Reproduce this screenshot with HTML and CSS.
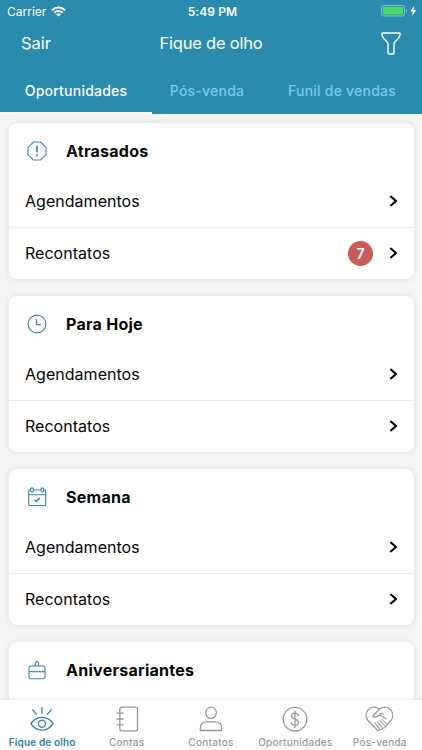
FILE: index.html
```html
<!DOCTYPE html>
<html lang="pt-BR">
<head>
<meta charset="utf-8">
<title>Fique de olho</title>
<link rel="stylesheet" href="styles.css">
</head>
<body>
<div class="app">
  <header class="header">
    <div class="status">
      <div class="status-left"><span>Carrier</span>
        <svg class="wifi" width="15" height="11" viewBox="0 0 15 11" fill="none" stroke="#fff" stroke-width="2"><path d="M1 4.2a9.3 9.3 0 0 1 13 0M3.4 6.7a5.9 5.9 0 0 1 8.2 0"/><path d="M7.5 10.6 5.2 8.4a3.3 3.3 0 0 1 4.6 0z" fill="#fff" stroke="none"/></svg>
      </div>
      <div class="time">5:49 PM</div>
      <div class="status-right">
        <svg width="36" height="12" viewBox="0 0 36 12"><rect x=".6" y=".6" width="23" height="10.4" rx="2.2" fill="none" stroke="#8fc2d6"/><rect x="2" y="2" width="20.2" height="7.6" rx="1" fill="#4cd964"/><path d="M25 4c1.3.5 1.3 3.1 0 3.600z" fill="#8fc2d6"/><path d="M33.300.7 29.300 6.600h2.600L30.900 11l4.300-6h-2.700z" fill="#fff"/></svg>
      </div>
    </div>
    <div class="nav">
      <span class="nav-action">Sair</span>
      <span class="nav-title">Fique de olho</span>
      <svg class="filter" width="20" height="23" viewBox="0 0 20 23" fill="none" stroke="#fff" stroke-width="1.4" stroke-linejoin="round"><path d="M1.600 1h16.800q1 .1.700 1.200c-.2 3.300-2.600 5.200-5.400 8.100q-.7.700-.7 1.700v8.700q0 1.300-1.300 1.300H8.300Q7 22 7 20.700V12q0-1-.7-1.700C3.500 7.400 1.100 5.500.9 2.200Q.7 1.100 1.600 1z"/></svg>
    </div>
    <nav class="tabs">
      <div class="tab tab-active"><span>Oportunidades</span></div>
      <div class="tab tab-middle"><span>Pós-venda</span></div>
      <div class="tab tab-last"><span>Funil de vendas</span></div>
    </nav>
  </header>

  <main class="content">
    <section class="card">
      <h2 class="card-head"><svg class="card-icon" viewBox="0 0 20 20"><path d="M6.400 1h7.200L19 6.400v7.200L13.600 19H6.400L1 13.600V6.400z"/><path d="M10 4.700v6.700M10 13.200v2" stroke-width="1.700"/></svg><span>Atrasados</span></h2>
      <div class="row"><span class="label">Agendamentos</span><svg class="chevron" viewBox="0 0 9 12"><path d="M1.300.9 7 6l-5.700 5.100"/></svg></div>
      <div class="row"><span class="label">Recontatos</span><span class="badge">7</span><svg class="chevron" viewBox="0 0 9 12"><path d="M1.300.9 7 6l-5.700 5.100"/></svg></div>
    </section>
    <section class="card">
      <h2 class="card-head"><svg class="card-icon" viewBox="0 0 20 20"><circle cx="10" cy="10" r="8.900"/><path d="M9.500 5v5.700h4.300" stroke-width="1.300"/></svg><span>Para Hoje</span></h2>
      <div class="row"><span class="label">Agendamentos</span><svg class="chevron" viewBox="0 0 9 12"><path d="M1.300.9 7 6l-5.700 5.100"/></svg></div>
      <div class="row"><span class="label">Recontatos</span><svg class="chevron" viewBox="0 0 9 12"><path d="M1.300.9 7 6l-5.700 5.100"/></svg></div>
    </section>
    <section class="card">
      <h2 class="card-head"><svg class="card-icon" viewBox="0 0 20 20"><path d="M3.500 3H2.700Q1.700 3 1.700 4v13.500q0 1 1 1h15q1 0 1-1V4q0-1-1-1h-.8M6.500 3h7.300M1.700 7.800h17"/><rect x="3.700" y=".9" width="2.600" height="4" rx="1.200"/><rect x="14" y=".9" width="2.600" height="4" rx="1.200"/><path d="m7.500 12.700 1.900 1.800 3.400-3.700" stroke-width="1.300"/></svg><span>Semana</span></h2>
      <div class="row"><span class="label">Agendamentos</span><svg class="chevron" viewBox="0 0 9 12"><path d="M1.300.9 7 6l-5.700 5.100"/></svg></div>
      <div class="row"><span class="label">Recontatos</span><svg class="chevron" viewBox="0 0 9 12"><path d="M1.300.9 7 6l-5.700 5.100"/></svg></div>
    </section>
    <section class="card">
      <h2 class="card-head"><svg class="card-icon" viewBox="0 0 20 20"><rect x="2" y="6" width="16" height="12.700" rx="1.700"/><path d="M8.300 6V2.900L9.900 1.300l1.600 1.600V6M2 11.300q1.300 1.200 2.700 0 1.300 1.200 2.600 0 1.300 1.200 2.700 0 1.300 1.200 2.700 0 1.300 1.200 2.600 0 1.300 1.200 2.700 0"/></svg><span>Aniversariantes</span></h2>
    </section>
  </main>

  <footer class="tabbar">
    <div class="item item-active"><svg width="30" height="28" viewBox="0 0 30 28"><path d="M4 17.700C9 9.200 21 9.200 26 17.700 21 26.200 9 26.200 4 17.700z"/><circle cx="15" cy="17.700" r="3.500"/><path d="M15 1.300v6M5.800 3.800l3.700 4.400M24.200 3.800l-3.700 4.400"/></svg><span>Fique de olho</span></div>
    <div class="item"><svg width="30" height="28" viewBox="0 0 30 28"><rect x="7.800" y="1.200" width="17.700" height="23.600" rx="2"/><path d="M5 7.200h6M5 13h6M5 18.800h6"/></svg><span>Contas</span></div>
    <div class="item"><svg width="30" height="28" viewBox="0 0 30 28"><ellipse cx="15" cy="6.800" rx="5.300" ry="5.600"/><path d="M4.300 24.500v-2.300q0-6.300 6.500-6.300h8.400q6.500 0 6.500 6.300v2.300z"/></svg><span>Contatos</span></div>
    <div class="item"><svg width="30" height="28" viewBox="0 0 30 28"><circle cx="15" cy="13.200" r="11.800"/><path d="M15 4.900v16.600M18.500 9.600C18.500 6.200 11.600 6.200 11.600 10s7 2.600 7 6.400-7.300 3.800-7.300.1"/></svg><span>Oportunidades</span></div>
    <div class="item"><svg width="30" height="28" viewBox="0 0 30 28"><path d="M12.700 24.500 2.800 14.300C-2.500 7 5.500-3 14.300 3.200 23-3 31.300 7 26 14.300l-4 4.200"/><path d="M14.300 3.200 8.200 9.700c-.9 1.600 2.400 2.300 5.300-.2l1.700-.3 5.600 3.600M15 7.600l3.200.2" /><path d="m9.800 17 5 6.500q-.8 1.700-2.100 1M12.400 15.700l5.300 6.300q-.9 2-2.900 1.500M15 14.500l5.500 6q-.8 1.900-2.800 1.500M17.400 13.500l4.600 5q-.2 1.700-1.500 2" stroke-width="1.100"/></svg><span>Pós-venda</span></div>
  </footer>
</div>
</body>
</html>
```
FILE: styles.css
```css
* { box-sizing: border-box; }
body { margin: 0; font-family: Inter, "Liberation Sans", sans-serif; color: #060606; }
.app { width: 422px; height: 750px; display: flex; flex-direction: column; background: #f6f6f6; overflow: hidden; }
.header { flex: none; height: 114px; background: #2b8bad; color: #fff; }
.status { height: 22px; display: grid; grid-template-columns: 1fr auto 1fr; align-items: center; font-size: 12px; }
.status-left { display: flex; align-items: center; gap: 5px; padding-left: 7px; letter-spacing: 0; }
.time { font-weight: 600; letter-spacing: .1px; padding-left: 3px; }
.status-right { display: flex; justify-content: flex-end; padding-right: 5px; }
.nav { height: 44px; display: grid; grid-template-columns: 1fr auto 1fr; align-items: center; padding: 0 21px 2px; font-size: 16.500px; }
.nav-title { letter-spacing: -.2px; }
.filter { justify-self: end; }
.tabs { height: 48px; display: flex; }
.tab { height: 48px; display: flex; align-items: center; justify-content: center; font-size: 14px; font-weight: 500; letter-spacing: .22px; color: #76c9ee; }
.tab-active { width: 152px; color: #fff; border-bottom: 2px solid #fff; padding-top: 2px; }
.tab-middle { width: 110px; }
.tab-last { width: 160px; }
.content { flex: 1; min-height: 0; overflow: hidden; padding: 9px 8.500px 0; display: flex; flex-direction: column; gap: 17px; }
.card { flex: none; height: 156px; background: #fff; border-radius: 8px; box-shadow: 0 0 6px rgba(0, 0, 0, .1); }
.card-head { height: 52px; margin: 0; padding: 4px 0 0 18.500px; display: flex; align-items: center; gap: 19px; font-size: 16px; font-weight: 700; letter-spacing: .27px; }
.card-icon { width: 20px; height: 20px; fill: none; stroke: #3585a8; stroke-width: 1.100; }
.row { height: 52px; display: flex; align-items: center; padding: 0 15.500px 0 16.500px; font-size: 16px; letter-spacing: .03px; }
.row + .row { border-top: 1px solid #ececec; padding-bottom: 1px; }
.label { flex: 1; }
.chevron { width: 9px; height: 12px; fill: none; stroke: #000; stroke-width: 2; }
.badge { width: 25px; height: 25px; margin-right: 16px; border-radius: 50%; background: #c75c5c; color: #fff; font-size: 14px; font-weight: 600; display: flex; align-items: center; justify-content: center; }
.tabbar { flex: none; height: 50px; position: relative; background: #fff; display: grid; grid-template-columns: repeat(5, 1fr); box-shadow: 0 0 5px rgba(0, 0, 0, .1); }
.item { display: flex; flex-direction: column; align-items: center; padding-top: 6px; font-size: 10px; font-weight: 500; letter-spacing: .25px; line-height: 14px; color: #989898; white-space: nowrap; }
.item svg { flex: none; fill: none; stroke: currentColor; stroke-width: 1.300; stroke-linecap: round; stroke-linejoin: round; }
.item span { margin-top: 1px; }
.item-active { color: #2d82a8; font-weight: 600; letter-spacing: .15px; }
```
